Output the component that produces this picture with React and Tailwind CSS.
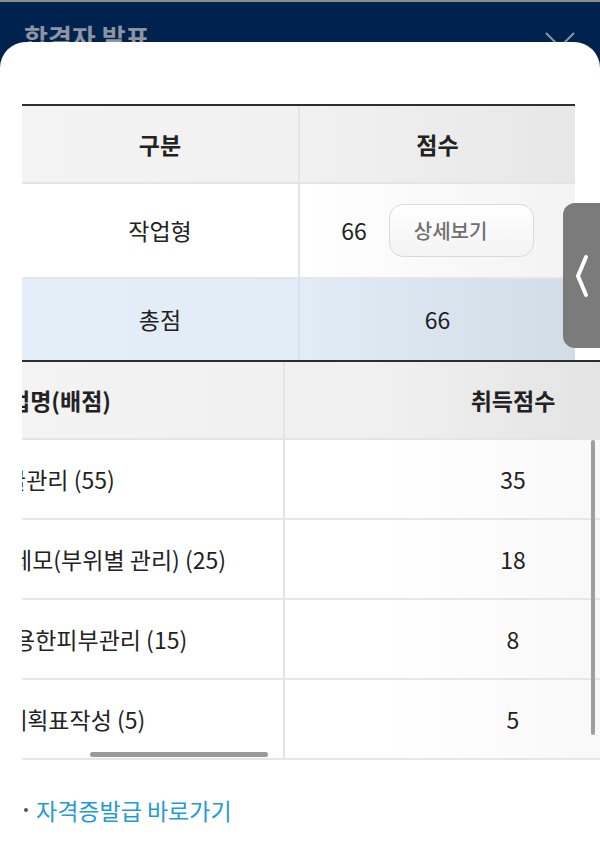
import React from "react";

const rows = [
  { name: "굴관리 (55)", off: "ml-[-17px]", score: "35" },
  { name: "제모(부위별 관리) (25)", off: "ml-[-11px]", score: "18" },
  { name: "용한피부관리 (15)", off: "ml-[-8px]", score: "8" },
  { name: "계획표작성 (5)", off: "ml-[-16px]", score: "5" },
];

export default function App() {
  return (
    <div className="relative w-[600px] h-[856px] overflow-hidden bg-[#00224f] font-['Noto_Sans_CJK_KR','Noto_Sans',sans-serif] text-[#222]">
      <div className="h-[2px] bg-[#8c8c8c]" />
      <div className="flex items-start justify-between pl-[24px] pr-[25px] pt-[22px] h-[40px]">
        <div className="text-[26px] font-bold leading-none text-[#8d94a2] whitespace-nowrap">합격자 발표</div>
        <svg width="30" height="30" viewBox="0 0 30 30" className="mt-[8px]">
          <path d="M1 1 L29 29 M29 1 L1 29" stroke="#8d94a2" strokeWidth="2" fill="none" />
        </svg>
      </div>

      <div className="relative h-[814px] rounded-t-[26px] bg-white pt-[62px] pl-[22px]">
        {/* table 1 */}
        <div className="w-[553px] border-t-2 border-[#2e2e2e]">
          <div className="grid grid-cols-[278px_275px] h-[78px] bg-linear-to-r from-[#f3f3f3] via-[#f1f1f1] to-[#e7e7e7] border-b-2 border-[#e4e4e4]">
            <div className="flex items-center justify-center border-r-2 border-[#e4e4e4] text-[23px] font-bold">구분</div>
            <div className="flex items-center justify-center text-[23px] font-bold">점수</div>
          </div>
          <div className="grid grid-cols-[278px_275px] h-[95px] bg-linear-to-r from-white via-white to-[#f3f3f3] border-b-2 border-[#e6e6e6]">
            <div className="flex items-center justify-center border-r-2 border-[#e4e4e4] text-[23px]">작업형</div>
            <div className="flex items-center justify-center gap-[22px]">
              <span className="text-[23px]">66</span>
              <div className="flex items-center justify-start pl-[24px] w-[145px] h-[53px] rounded-[14px] border-[1.5px] border-[#d9d9d9] bg-linear-to-b from-white to-[#f3f3f3] text-[20px] font-medium text-[#707070]">
                상세보기
              </div>
            </div>
          </div>
          <div className="grid grid-cols-[278px_275px] h-[81px] bg-linear-to-r from-[#e4eef9] via-[#e2ecf7] to-[#d2dce7]">
            <div className="flex items-center justify-center border-r-2 border-[#d9e2ec] text-[23px]">총점</div>
            <div className="flex items-center justify-center text-[23px]">66</div>
          </div>
        </div>

        {/* table 2 */}
        <div className="w-[578px] overflow-hidden border-t-2 border-[#2e2e2e]">
          <div className="w-[719px]">
            <div className="grid grid-cols-[263px_456px] h-[78px] bg-linear-to-r from-[#f3f3f3] via-[#f0f0f0] to-[#dcdcdc] border-b-2 border-[#e4e4e4]">
              <div className="flex items-center border-r-2 border-[#e4e4e4] overflow-hidden">
                <span className="ml-[-13px] whitespace-nowrap text-[23px] font-bold">업명(배점)</span>
              </div>
              <div className="flex items-center justify-center text-[23px] font-bold">취득점수</div>
            </div>
            {rows.map((r) => (
              <div key={r.name} className="grid grid-cols-[263px_456px] h-[80px] bg-linear-to-r from-white via-white to-[#f4f4f4] border-b-2 border-[#e6e6e6]">
                <div className="flex items-center border-r-2 border-[#e4e4e4] overflow-hidden">
                  <span className={`${r.off} whitespace-nowrap text-[23px]`}>{r.name}</span>
                </div>
                <div className="flex items-center justify-center text-[23px]">{r.score}</div>
              </div>
            ))}
          </div>
        </div>

        <div className="mt-[36px] flex items-center h-[28px] text-[23px] leading-none">
          <span className="ml-[2px] mr-[8px] w-[4px] h-[4px] rounded-full bg-[#555]" />
          <span className="text-[#1f9bd7]">자격증발급 바로가기</span>
        </div>

        {/* scrollbars */}
        <div className="absolute left-[591px] top-[398px] w-[4px] h-[295px] rounded-full bg-[#9e9e9e]" />
        <div className="absolute left-[90px] top-[710px] w-[178px] h-[5px] rounded-full bg-[#9a9a9a]" />
      </div>

      {/* side handle */}
      <div className="absolute left-[563px] top-[203px] w-[37px] h-[145px] rounded-l-[12px] bg-[#7b7b7b] flex items-center pl-[11px]">
        <svg width="16" height="44" viewBox="0 0 16 44">
          <path d="M12 3 L4 22 L12 41" stroke="white" strokeWidth="4" strokeLinecap="round" strokeLinejoin="round" fill="none" />
        </svg>
      </div>
    </div>
  );
}
